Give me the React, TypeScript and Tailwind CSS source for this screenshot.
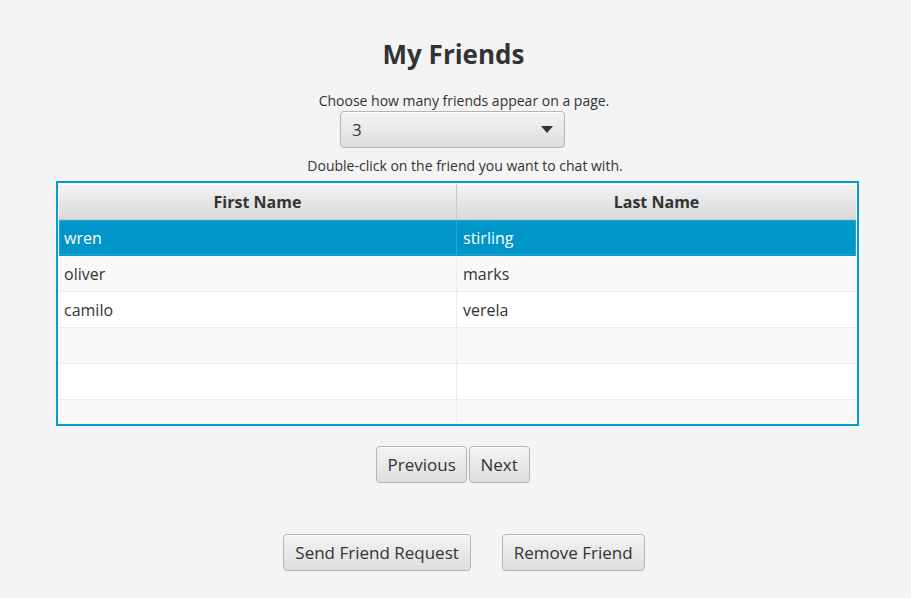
import { useState } from 'react';

const friends = [
  { first: 'wren', last: 'stirling' },
  { first: 'oliver', last: 'marks' },
  { first: 'camilo', last: 'verela' },
];

const font = { fontFamily: '"Open Sans", "Noto Sans", sans-serif' };

function FxButton({ label, className = '' }: { label: string; className?: string }) {
  return (
    <button
      className={`h-[37px] rounded-[4px] border border-[#b4b4b4] bg-gradient-to-b from-[#f4f4f4] to-[#dedede] px-[11px] text-[17px] text-[#333] shadow-[inset_0_1px_0_#fff] ${className}`}
    >
      {label}
    </button>
  );
}

export default function App() {
  const [selected, setSelected] = useState(0);
  const rows = Array.from({ length: 6 }, (_, i) => friends[i]);

  return (
    <div className="min-h-[598px] w-full bg-[#f4f4f4] text-[#333]" style={font}>
      <div className="flex flex-col items-center pt-[36px]">
        <h1 className="mr-[4px] text-[26px] font-bold leading-[36px] text-[#333]">My Friends</h1>

        <p className="ml-[17px] mt-[20px] text-[14px] leading-[18px]">Choose how many friends appear on a page.</p>
        <div className="mr-[6px] mt-[1px] flex h-[37px] w-[225px] items-center justify-between rounded-[4px] border border-[#b4b4b4] bg-gradient-to-b from-[#f4f4f4] to-[#dedede] pl-[11px] pr-[11px] shadow-[inset_0_1px_0_#fff]">
          <span className="text-[17px]">3</span>
          <svg width="12" height="7" viewBox="0 0 12 7">
            <path d="M0 0 L12 0 L6 7 Z" fill="#333" />
          </svg>
        </div>

        <p className="ml-[19px] mt-[9px] text-[14px] leading-[18px]">Double-click on the friend you want to chat with.</p>

        <div className="ml-[4px] mt-[6px] w-[803px] border-2 border-[#039ed3] bg-white p-[1px]">
          <div className="grid grid-cols-[398px_1fr] border-b border-[#c8c8c8] bg-gradient-to-b from-[#f4f4f4] to-[#d9d9d9] shadow-[inset_0_1px_0_#fff]">
            <div className="flex h-[35px] items-center justify-center border-r border-[#c8c8c8] text-[16px] font-bold">
              First Name
            </div>
            <div className="flex h-[35px] items-center justify-center text-[16px] font-bold">Last Name</div>
          </div>
          {rows.map((r, i) => {
            const sel = i === selected && r;
            return (
              <div
                key={i}
                onClick={() => r && setSelected(i)}
                className={`grid grid-cols-[398px_1fr] border-b ${
                  i === 5 ? 'h-[23px] border-b-0' : 'h-[36px]'
                } ${
                  sel
                    ? 'border-[#0096c9] bg-[#0096c9] text-white shadow-[inset_0_0_0_1px_#1fa6d4]'
                    : i % 2 === 1
                    ? 'border-[#ececec] bg-[#f9f9f9]'
                    : 'border-[#ececec] bg-white'
                }`}
              >
                <div
                  className={`flex items-center border-r pl-[5px] text-[16px] ${
                    sel ? 'border-[#1fa6d4]' : 'border-[#ececec]'
                  }`}
                >
                  {r?.first}
                </div>
                <div className="flex items-center pl-[6px] text-[16px]">{r?.last}</div>
              </div>
            );
          })}
        </div>

        <div className="mr-[6px] mt-[20px] flex gap-[2px]">
          <FxButton label="Previous" className="w-[91px] px-0" />
          <FxButton label="Next" className="w-[61px] px-0" />
        </div>

        <div className="ml-[17px] mt-[51px] flex gap-[31px]">
          <FxButton label="Send Friend Request" />
          <FxButton label="Remove Friend" />
        </div>
      </div>
    </div>
  );
}
